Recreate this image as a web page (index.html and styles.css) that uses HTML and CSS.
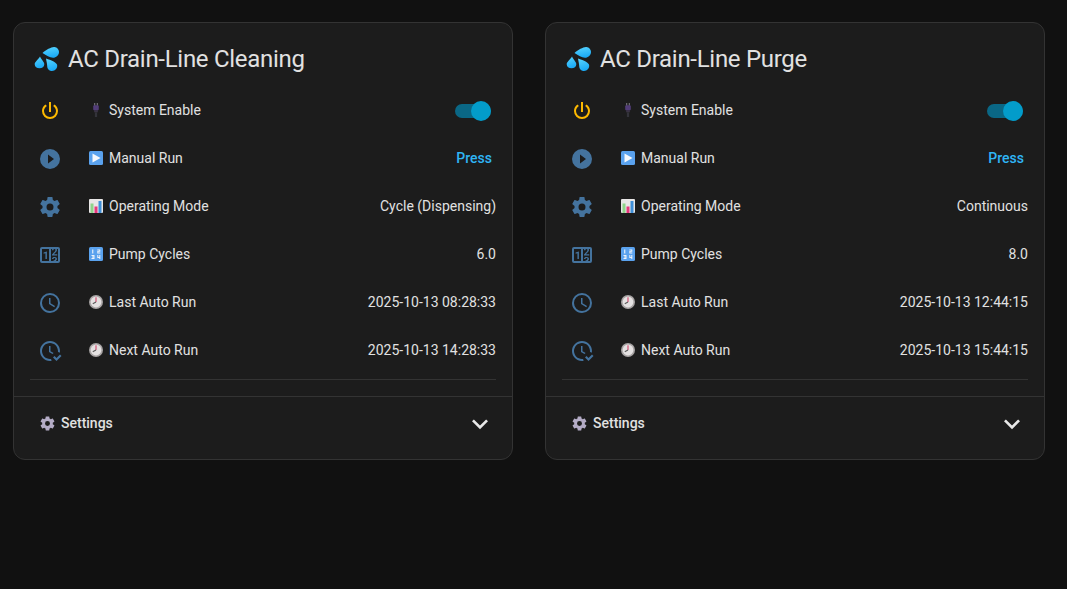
FILE: index.html
```html
<!DOCTYPE html>
<html lang="en">
<head>
<meta charset="utf-8">
<title>AC Drain-Line</title>
<link rel="stylesheet" href="styles.css">
</head>
<body>
<svg class="defs" aria-hidden="true">
  <defs>
    <linearGradient id="drop" x1="0" y1="0" x2="0.3" y2="1">
      <stop offset="0" stop-color="#5ad6ff"/><stop offset="1" stop-color="#1cabf6"/>
    </linearGradient>
    <symbol id="i-power" viewBox="0 0 24 24"><path d="M16.56,5.44L15.11,6.89C16.84,7.94 18,9.83 18,12A6,6 0 0,1 12,18A6,6 0 0,1 6,12C6,9.83 7.16,7.94 8.88,6.88L7.44,5.44C5.36,6.88 4,9.28 4,12A8,8 0 0,0 12,20A8,8 0 0,0 20,12C20,9.28 18.64,6.88 16.56,5.44M13,3H11V13H13"/></symbol>
    <symbol id="i-play" viewBox="0 0 24 24"><path d="M10,16.5V7.5L16,12M12,2A10,10 0 0,0 2,12A10,10 0 0,0 12,22A10,10 0 0,0 22,12A10,10 0 0,0 12,2Z"/></symbol>
    <symbol id="i-cog" viewBox="0 0 24 24"><path d="M12,15.5A3.5,3.5 0 0,1 8.5,12A3.5,3.5 0 0,1 12,8.5A3.5,3.5 0 0,1 15.5,12A3.5,3.5 0 0,1 12,15.5M19.43,12.97C19.47,12.65 19.5,12.33 19.5,12C19.5,11.67 19.47,11.34 19.43,11L21.54,9.37C21.73,9.22 21.78,8.95 21.66,8.73L19.66,5.27C19.54,5.05 19.27,4.96 19.05,5.05L16.56,6.05C16.04,5.66 15.5,5.32 14.87,5.07L14.5,2.42C14.46,2.18 14.25,2 14,2H10C9.75,2 9.54,2.18 9.5,2.42L9.13,5.07C8.5,5.32 7.96,5.66 7.44,6.05L4.95,5.05C4.73,4.96 4.46,5.05 4.34,5.27L2.34,8.73C2.21,8.95 2.27,9.22 2.46,9.37L4.57,11C4.53,11.34 4.5,11.67 4.5,12C4.5,12.33 4.53,12.65 4.57,12.97L2.46,14.63C2.27,14.78 2.21,15.05 2.34,15.27L4.34,18.73C4.46,18.95 4.73,19.03 4.95,18.95L7.44,17.94C7.96,18.34 8.5,18.68 9.13,18.93L9.5,21.58C9.54,21.82 9.75,22 10,22H14C14.25,22 14.46,21.82 14.5,21.58L14.87,18.93C15.5,18.67 16.04,18.34 16.56,17.94L19.05,18.95C19.27,19.03 19.54,18.95 19.66,18.73L21.66,15.27C21.78,15.05 21.73,14.78 21.54,14.63L19.43,12.97Z"/></symbol>
    <symbol id="i-counter" viewBox="0 0 24 24"><path d="M4,4H20A2,2 0 0,1 22,6V18A2,2 0 0,1 20,20H4A2,2 0 0,1 2,18V6A2,2 0 0,1 4,4M4,6V18H11V6H4M20,18V6H18.76C19,6.54 18.95,7.07 18.95,7.13C18.88,7.8 18.41,8.5 18.24,8.75L15.91,11.3L19.23,11.28L19.24,12.5L14.04,12.47L14,11.47C14,11.47 17.05,8.24 17.2,7.95C17.34,7.67 17.91,6 16.5,6C15.27,6.05 15.41,7.3 15.41,7.3L13.87,7.31C13.87,7.31 13.88,6.65 14.25,6H13V18H15.58L15.57,17.14L16.54,17.13C16.54,17.13 17.45,16.97 17.46,16.08C17.5,15.08 16.65,15.08 16.5,15.08C16.37,15.08 15.43,15.13 15.43,15.95H13.91C13.91,15.95 13.95,13.89 16.5,13.89C19.1,13.89 18.96,15.91 18.96,15.91C18.96,15.91 19,17.16 17.85,17.63L18.37,18H20M8.92,16H7.42V10.2L5.62,10.76V9.53L8.76,8.41H8.92V16Z"/></symbol>
    <symbol id="i-clock" viewBox="0 0 24 24"><path d="M12,20A8,8 0 0,0 20,12A8,8 0 0,0 12,4A8,8 0 0,0 4,12A8,8 0 0,0 12,20M12,2A10,10 0 0,1 22,12A10,10 0 0,1 12,22C6.47,22 2,17.5 2,12A10,10 0 0,1 12,2M12.5,7V12.25L17,14.92L16.25,16.15L11,13V7H12.5Z"/></symbol>
    <symbol id="i-clockcheck" viewBox="0 0 24 24"><path d="M23.5 17L18.5 22L15 18.5L16.5 17L18.5 19L22 15.5L23.5 17M13.1 19.9C12.7 20 12.4 20 12 20C7.6 20 4 16.4 4 12S7.6 4 12 4 20 7.6 20 12C20 12.4 20 12.7 19.9 13.1C20.6 13.2 21.2 13.4 21.8 13.7C21.9 13.1 22 12.6 22 12C22 6.5 17.5 2 12 2S2 6.5 2 12C2 17.5 6.5 22 12 22C12.6 22 13.2 21.9 13.7 21.8C13.4 21.3 13.2 20.6 13.1 19.9M15.6 14.1L12.5 12.3V7H11V13L14.5 15.1C14.9 14.8 15.2 14.4 15.6 14.1Z"/></symbol>
    <symbol id="i-chevron" viewBox="0 0 24 24"><path d="M7.41,8.58L12,13.17L16.59,8.58L18,10L12,16L6,10L7.41,8.58Z"/></symbol>

    <symbol id="e-drops" viewBox="0 0 25 24">
      <path fill="url(#drop)" d="M8.500 6C12 2.800 17 .2 20 0C23 -.1 25 2.500 25 5C25 8.200 22.200 10.800 19 10.800C15.500 10.800 12.500 8.200 8.500 6z"/>
      <path fill="url(#drop)" d="M6 9.500C7.500 12.800 10.300 15 10.300 17.200C10.300 19.800 8.200 21.300 5.500 21.300C2.800 21.300 .7 19.800 .7 17.200C.7 15 4 12.800 6 9.500z"/>
      <path fill="url(#drop)" d="M12 11.500C15 12.800 21.500 14.300 23 17.500C24 20.800 21.200 24 18 24C15 24 13.200 21.800 13.200 19C13.200 17 12.500 14.500 12 11.500z"/>
    </symbol>
    <symbol id="e-plug" viewBox="0 0 14 15">
      <rect x="5" y="0" width="1.200" height="3" fill="#77757c"/><rect x="7.800" y="0" width="1.200" height="3" fill="#77757c"/>
      <rect x="4" y="2.500" width="6" height="5.500" rx="1.200" fill="#523d78"/>
      <rect x="5" y="8" width="4" height="2" fill="#3a3344"/>
      <rect x="5.800" y="10" width="2.400" height="5" fill="#33333a"/>
    </symbol>
    <symbol id="e-play" viewBox="0 0 14 14">
      <rect width="14" height="14" rx="1.500" fill="#5aa2ee"/>
      <path d="M3.500 2.500L11.500 7L3.500 11.500z" fill="#f6f8fc"/>
    </symbol>
    <symbol id="e-chart" viewBox="0 0 14 14">
      <rect width="14" height="14" rx="1" fill="#e8e6e6"/>
      <rect x="1.500" y="4.500" width="3" height="9.500" fill="#8ed48a"/>
      <rect x="5.500" y="7.500" width="3" height="6.500" fill="#e8387c"/>
      <rect x="9.500" y="2" width="3" height="12" fill="#3f8fd8"/>
    </symbol>
    <symbol id="e-nums" viewBox="0 0 14 14">
      <rect width="14" height="14" rx="1.500" fill="#5aa2ee"/>
      <g fill="#eef3fa">
        <rect x="3.200" y="2.500" width="1.100" height="4"/>
        <path d="M8.300 2.500h3v2.300h-2v.8h2v.9h-3V4h2v-.6h-2z"/>
        <path d="M2.500 8h3v4h-3v-.9h2v-.7h-1.500v-.8h1.500v-.7h-2z"/>
        <path d="M8.300 8h1v2h1v-2h1v4h-1v-1.100h-2z"/>
      </g>
    </symbol>
    <symbol id="e-clock" viewBox="0 0 14 14">
      <circle cx="7" cy="7" r="7" fill="#a8a4a4"/>
      <circle cx="7" cy="7" r="5.400" fill="#e4e1e1"/>
      <path d="M7 7V2.300" stroke="#d0355f" stroke-width="1" fill="none"/>
      <path d="M7 7L3.800 8.800" stroke="#5a5a5a" stroke-width="1.100" fill="none"/>
    </symbol>
  </defs>
</svg>

<main class="board">
  <section class="card">
    <h2 class="card-title"><svg class="title-emoji"><use href="#e-drops"/></svg>AC Drain-Line Cleaning</h2>
    <div class="rows">
      <div class="row">
        <span class="state-icon"><svg class="mdi on"><use href="#i-power"/></svg></span>
        <span class="label"><svg class="emoji"><use href="#e-plug"/></svg>System Enable</span>
        <span class="toggle"><span class="thumb"></span></span>
      </div>
      <div class="row">
        <span class="state-icon"><svg class="mdi"><use href="#i-play"/></svg></span>
        <span class="label"><svg class="emoji"><use href="#e-play"/></svg>Manual Run</span>
        <span class="press">Press</span>
      </div>
      <div class="row">
        <span class="state-icon"><svg class="mdi"><use href="#i-cog"/></svg></span>
        <span class="label"><svg class="emoji"><use href="#e-chart"/></svg>Operating Mode</span>
        <span class="value">Cycle (Dispensing)</span>
      </div>
      <div class="row">
        <span class="state-icon"><svg class="mdi"><use href="#i-counter"/></svg></span>
        <span class="label"><svg class="emoji"><use href="#e-nums"/></svg>Pump Cycles</span>
        <span class="value">6.0</span>
      </div>
      <div class="row">
        <span class="state-icon"><svg class="mdi"><use href="#i-clock"/></svg></span>
        <span class="label"><svg class="emoji"><use href="#e-clock"/></svg>Last Auto Run</span>
        <span class="value">2025-10-13 08:28:33</span>
      </div>
      <div class="row">
        <span class="state-icon"><svg class="mdi"><use href="#i-clockcheck"/></svg></span>
        <span class="label"><svg class="emoji"><use href="#e-clock"/></svg>Next Auto Run</span>
        <span class="value">2025-10-13 14:28:33</span>
      </div>
    </div>
    <div class="divider"></div>
    <div class="settings">
      <span class="settings-label"><svg class="gear"><use href="#i-cog"/></svg>Settings</span>
      <svg class="chevron"><use href="#i-chevron"/></svg>
    </div>
  </section>

  <section class="card">
    <h2 class="card-title"><svg class="title-emoji"><use href="#e-drops"/></svg>AC Drain-Line Purge</h2>
    <div class="rows">
      <div class="row">
        <span class="state-icon"><svg class="mdi on"><use href="#i-power"/></svg></span>
        <span class="label"><svg class="emoji"><use href="#e-plug"/></svg>System Enable</span>
        <span class="toggle"><span class="thumb"></span></span>
      </div>
      <div class="row">
        <span class="state-icon"><svg class="mdi"><use href="#i-play"/></svg></span>
        <span class="label"><svg class="emoji"><use href="#e-play"/></svg>Manual Run</span>
        <span class="press">Press</span>
      </div>
      <div class="row">
        <span class="state-icon"><svg class="mdi"><use href="#i-cog"/></svg></span>
        <span class="label"><svg class="emoji"><use href="#e-chart"/></svg>Operating Mode</span>
        <span class="value">Continuous</span>
      </div>
      <div class="row">
        <span class="state-icon"><svg class="mdi"><use href="#i-counter"/></svg></span>
        <span class="label"><svg class="emoji"><use href="#e-nums"/></svg>Pump Cycles</span>
        <span class="value">8.0</span>
      </div>
      <div class="row">
        <span class="state-icon"><svg class="mdi"><use href="#i-clock"/></svg></span>
        <span class="label"><svg class="emoji"><use href="#e-clock"/></svg>Last Auto Run</span>
        <span class="value">2025-10-13 12:44:15</span>
      </div>
      <div class="row">
        <span class="state-icon"><svg class="mdi"><use href="#i-clockcheck"/></svg></span>
        <span class="label"><svg class="emoji"><use href="#e-clock"/></svg>Next Auto Run</span>
        <span class="value">2025-10-13 15:44:15</span>
      </div>
    </div>
    <div class="divider"></div>
    <div class="settings">
      <span class="settings-label"><svg class="gear"><use href="#i-cog"/></svg>Settings</span>
      <svg class="chevron"><use href="#i-chevron"/></svg>
    </div>
  </section>
</main>
</body>
</html>
```

FILE: styles.css
```css
* { box-sizing: border-box; }

html, body { height: 100%; }

body {
  margin: 0;
  background: #111111;
  color: #e1e1e1;
  font-family: Roboto, "Liberation Sans", sans-serif;
  font-size: 14px;
  overflow: hidden;
}

.defs { display: block; width: 0; height: 0; }

.board {
  display: grid;
  grid-template-columns: 500px 500px;
  gap: 32px;
  padding: 22px 0 0 13px;
  align-items: start;
}

.card {
  height: 438px;
  background: #1c1c1c;
  border: 1px solid #333333;
  border-radius: 12px;
}

.card-title {
  display: flex;
  align-items: center;
  height: 63px;
  margin: 0;
  padding: 9px 0 0 20px;
  font-size: 24px;
  font-weight: 400;
  letter-spacing: -0.012em;
  color: #e1e1e1;
}

.title-emoji {
  width: 25px;
  height: 24px;
  margin-right: 9px;
  flex: none;
}

.rows { padding: 0 16px; }

.row {
  display: flex;
  align-items: center;
  height: 48px;
}

.state-icon {
  display: flex;
  justify-content: center;
  width: 40px;
  margin-top: 2px;
  flex: none;
}

.mdi {
  width: 24px;
  height: 24px;
  fill: #44739e;
}

.mdi.on { fill: #fdb900; }

.label {
  display: flex;
  align-items: center;
  flex: 1;
  margin-left: 19px;
  margin-top: -1px;
}

.emoji {
  width: 14px;
  height: 14px;
  margin-right: 6px;
  flex: none;
}

.value { margin-top: -1px; }

.press {
  margin-right: 4px;
  margin-top: -1px;
  color: #2fb5f5;
  font-weight: 500;
}

.toggle {
  position: relative;
  display: block;
  width: 36px;
  height: 14px;
  margin-top: 2px;
  margin-right: 5px;
  background: #0a6785;
  border-radius: 7px;
}

.thumb {
  position: absolute;
  top: -3px;
  right: 0;
  width: 20px;
  height: 20px;
  background: #039cca;
  border-radius: 50%;
}

.divider {
  height: 1px;
  margin: 5px 16px 0;
  background: #333333;
}

.settings {
  display: flex;
  align-items: center;
  justify-content: space-between;
  height: 53px;
  margin-top: 16px;
  padding: 0 16px 0 25px;
  border-top: 1px solid #333333;
}

.settings-label {
  display: flex;
  align-items: center;
  font-weight: 500;
}

.gear {
  width: 17px;
  height: 17px;
  margin-right: 5px;
  fill: #b4acc6;
}

.chevron {
  width: 32px;
  height: 32px;
  margin-top: 2px;
  fill: #e8e8e8;
}
```
